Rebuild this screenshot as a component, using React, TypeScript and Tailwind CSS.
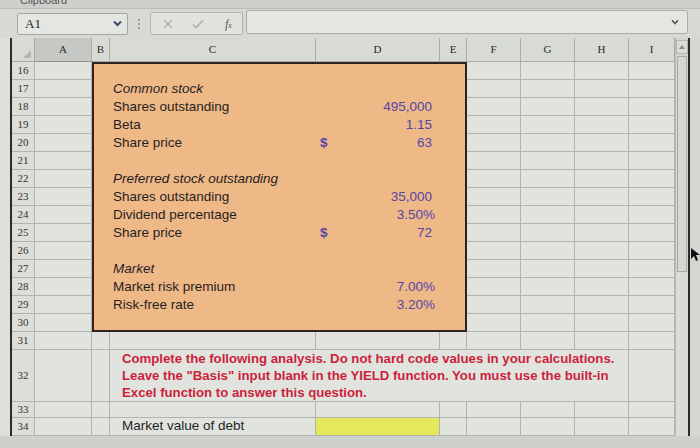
import React from "react";

const COLS = [23, 57, 18, 206, 124, 27, 54, 54, 54, 46];
const LETTERS = ["", "A", "B", "C", "D", "E", "F", "G", "H", "I"];

type RowData = { n: number; h: number };
const ROWS: RowData[] = [
  ...Array.from({ length: 16 }, (_, i) => ({ n: 16 + i, h: 18 })),
  { n: 32, h: 52 },
  { n: 33, h: 16 },
  { n: 34, h: 18 },
];

const LABELS: Record<number, { c?: string; italic?: boolean; dollar?: boolean; v?: string; pct?: boolean }> = {
  17: { c: "Common stock", italic: true },
  18: { c: "Shares outstanding", v: "495,000" },
  19: { c: "Beta", v: "1.15" },
  20: { c: "Share price", dollar: true, v: "63" },
  22: { c: "Preferred stock outstanding", italic: true },
  23: { c: "Shares outstanding", v: "35,000" },
  24: { c: "Dividend percentage", v: "3.50%", pct: true },
  25: { c: "Share price", dollar: true, v: "72" },
  27: { c: "Market", italic: true },
  28: { c: "Market risk premium", v: "7.00%", pct: true },
  29: { c: "Risk-free rate", v: "3.20%", pct: true },
};

const grid = "border-r border-b border-[#b1b4ae]";

function RowNum({ n, h }: RowData) {
  return (
    <div
      className={`flex items-center justify-center ${grid} bg-[#dcdfd9] text-[11px] text-[#333] font-['Liberation_Serif',serif]`}
      style={{ width: COLS[0], height: h }}
    >
      {n}
    </div>
  );
}

function Row({ n, h }: RowData) {
  const orange = n >= 16 && n <= 30;
  const d = LABELS[n];
  if (orange) {
    const top = n === 16 ? "border-t-2" : "";
    const bot = n === 30 ? "border-b-2" : "";
    return (
      <div className="flex">
        <RowNum n={n} h={h} />
        <div className={`${grid} bg-[#e1e4de]`} style={{ width: COLS[1], height: h }} />
        <div
          className={`border-l-2 border-[#2e241c] ${top} ${bot} bg-[#efb887]`}
          style={{ width: COLS[2], height: h }}
        />
        <div
          className={`flex items-center pl-[3px] border-[#2e241c] ${top} ${bot} bg-[#efb887] text-[13.5px] text-[#1f1f1f] whitespace-nowrap ${d?.italic ? "italic" : ""}`}
          style={{ width: COLS[3], height: h }}
        >
          {d?.c}
        </div>
        <div
          className={`flex items-center justify-between pl-[4px] ${d?.pct ? "pr-[5px]" : "pr-[8px]"} border-[#2e241c] ${top} ${bot} bg-[#efb887] text-[13.5px] text-[#5545a6]`}
          style={{ width: COLS[4], height: h }}
        >
          <span className="font-semibold">{d?.dollar ? "$" : ""}</span>
          <span>{d?.v}</span>
        </div>
        <div
          className={`border-r-2 border-[#2e241c] ${top} ${bot} bg-[#efb887]`}
          style={{ width: COLS[5], height: h }}
        />
        {COLS.slice(6).map((w, i) => (
          <div key={i} className={`${grid} bg-[#e1e4de]`} style={{ width: w, height: h }} />
        ))}
      </div>
    );
  }
  if (n === 32) {
    const merged = COLS[3] + COLS[4] + COLS[5] + COLS[6] + COLS[7] + COLS[8];
    return (
      <div className="flex">
        <RowNum n={n} h={h} />
        <div className={`${grid} bg-[#e1e4de]`} style={{ width: COLS[1], height: h }} />
        <div className={`${grid} bg-[#e1e4de]`} style={{ width: COLS[2], height: h }} />
        <div
          className={`flex flex-col justify-center pl-[12px] ${grid} bg-[#e1e4de] text-[13.2px] leading-[17px] font-bold text-[#cc1f3c] whitespace-nowrap`}
          style={{ width: merged, height: h }}
        >
          <span>Complete the following analysis. Do not hard code values in your calculations.</span>
          <span>Leave the "Basis" input blank in the YIELD function. You must use the built-in</span>
          <span>Excel function to answer this question.</span>
        </div>
        <div className={`${grid} bg-[#e1e4de]`} style={{ width: COLS[9], height: h }} />
      </div>
    );
  }
  return (
    <div className="flex">
      <RowNum n={n} h={h} />
      {COLS.slice(1).map((w, i) => {
        const col = i + 1;
        const yellow = n === 34 && col === 4;
        return (
          <div
            key={i}
            className={`flex items-center ${grid} ${yellow ? "bg-[#e4e85c]" : "bg-[#e1e4de]"} text-[13.5px] text-[#1f1f1f] whitespace-nowrap ${col === 3 ? "pl-[12px]" : ""}`}
            style={{ width: w, height: h }}
          >
            {n === 34 && col === 3 ? "Market value of debt" : ""}
          </div>
        );
      })}
    </div>
  );
}

export default function App() {
  return (
    <div className="w-[700px] h-[448px] overflow-hidden bg-[#d6d9d4] font-['Liberation_Sans',Arial,sans-serif] flex flex-col">
      {/* top strip */}
      <div className="h-[9px] bg-[#cdd0cb] border-b border-[#b9bcb7] overflow-hidden">
        <div className="ml-[20px] -mt-[8px] text-[11px] text-[#555]">Clipboard</div>
      </div>
      {/* formula bar */}
      <div className="h-[29px] flex items-center">
        <div className="ml-[17px] w-[111px] h-[22px] flex items-center justify-between pl-[7px] pr-[5px] bg-[#e3e6e1] border border-[#a4a7a2] rounded-[2px]">
          <span className="text-[13px] text-[#222] font-['Liberation_Serif',serif]">A1</span>
          <svg width="9" height="7" viewBox="0 0 9 7">
            <path d="M1 1.5 L4.5 5 L8 1.5" fill="none" stroke="#3a4a6a" strokeWidth="2" />
          </svg>
        </div>
        <div className="ml-[10px] w-[3px] flex flex-col gap-[2px]">
          <div className="w-[2px] h-[2px] bg-[#9a9d98]" />
          <div className="w-[2px] h-[2px] bg-[#9a9d98]" />
          <div className="w-[2px] h-[2px] bg-[#9a9d98]" />
        </div>
        <div className="ml-[9px] w-[93px] h-[23px] flex items-center bg-[#e0e3de] border border-[#b0b3ae] rounded-[2px]">
          <svg className="ml-[12px]" width="10" height="10" viewBox="0 0 10 10">
            <path d="M1.5 1.5 L8.5 8.5 M8.5 1.5 L1.5 8.5" stroke="#a8aba6" strokeWidth="1.3" />
          </svg>
          <svg className="ml-[19px]" width="12" height="10" viewBox="0 0 12 10">
            <path d="M1 5.5 L4.2 8.5 L11 1.2" fill="none" stroke="#a8aba6" strokeWidth="1.4" />
          </svg>
          <span className="ml-[21px] text-[12px] italic font-['Liberation_Serif',serif] text-[#555] leading-none">
            f<span className="text-[8px]">x</span>
          </span>
        </div>
        <div className="ml-[3px] w-[442px] h-[24px] -mt-[3px] flex items-center justify-end pr-[8px] bg-[#e3e6e1] border border-[#a9aca7] rounded-[2px]">
          <svg width="8" height="6" viewBox="0 0 8 6">
            <path d="M1 1.2 L4 4.5 L7 1.2" fill="none" stroke="#555" strokeWidth="1.6" />
          </svg>
        </div>
      </div>
      {/* sheet */}
      <div className="flex">
        <div className="w-[12px] bg-[#dcdfda]" />
        <div className="flex flex-col border-l-2 border-[#2b2b2b] -ml-[2px]">
          {/* header */}
          <div className="flex h-[24px]">
            {COLS.map((w, i) => (
              <div
                key={i}
                className={`flex items-center justify-center border-r border-b border-[#a9aca6] text-[11px] text-[#2a2a2a] font-['Liberation_Serif',serif] ${
                  i === 1 ? "bg-[#c6c9c3] border-b-[#8f948c]" : "bg-[#d8dbd5]"
                }`}
                style={{ width: w }}
              >
                {i === 0 ? (
                  <svg className="ml-[8px] mt-[8px]" width="8" height="8" viewBox="0 0 8 8">
                    <path d="M8 0 L8 8 L0 8 Z" fill="#b4b7b1" />
                  </svg>
                ) : (
                  LETTERS[i]
                )}
              </div>
            ))}
          </div>
          {ROWS.map((r) => (
            <Row key={r.n} n={r.n} h={r.h} />
          ))}
        </div>
        {/* scrollbar */}
        <div className="w-[13px] flex flex-col bg-[#d2d5d0] border-l border-[#b8bbb6]">
          <div className="mt-[2px] h-[14px] flex items-center justify-center border border-[#b3b6b1] bg-[#d9dcd7]">
            <svg width="6" height="4" viewBox="0 0 6 4">
              <path d="M0 4 L3 0 L6 4 Z" fill="#8a8d88" />
            </svg>
          </div>
          <div className="mt-[2px] mx-[1px] h-[216px] border border-[#a9aca7] bg-[#d5d8d3]" />
          <div className="flex-1 bg-[#d9dcd7]" />
        </div>
        <div className="w-[2px] bg-[#2b2b2b]" />
        <div className="flex-1 relative bg-[#d3d6d1]">
          <svg className="absolute left-[1px] top-[210px]" width="10" height="14" viewBox="0 0 10 14">
            <path d="M0 0 L0 11 L3 8 L5 13 L7 12 L5 7 L9 7 Z" fill="#111" />
          </svg>
        </div>
      </div>
      <div className="flex-1 bg-[#cdd0cb]" />
    </div>
  );
}
